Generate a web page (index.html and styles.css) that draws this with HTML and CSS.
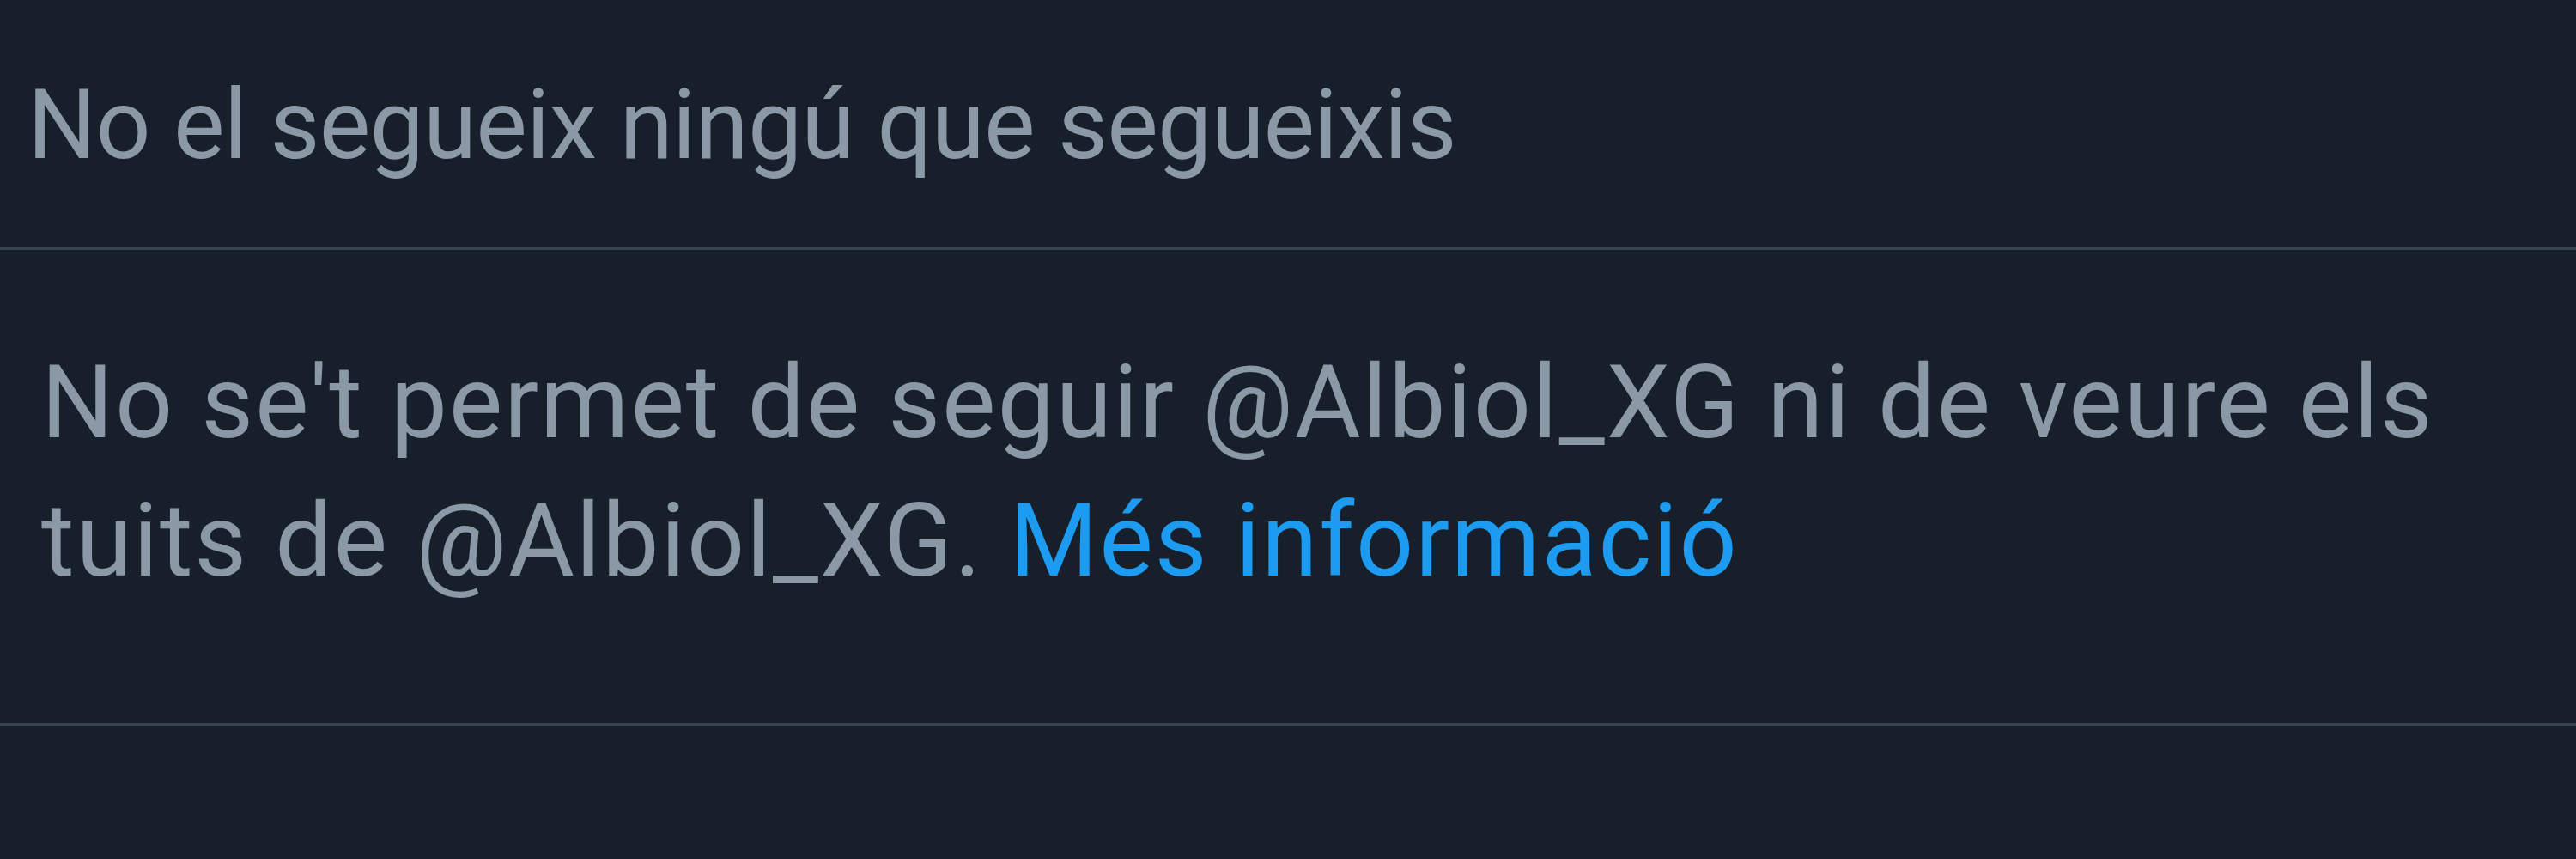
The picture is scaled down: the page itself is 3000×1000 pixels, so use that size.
FILE: index.html
```html
<!DOCTYPE html>
<html lang="ca">
<head>
<meta charset="utf-8">
<link rel="stylesheet" href="styles.css">
</head>
<body>
  <div class="page">
    <section class="row row-top">
      <p class="muted muted-small">No el segueix ningú que segueixis</p>
    </section>
    <section class="row row-notice">
      <p class="muted muted-large">No se't permet de seguir @Albiol_XG ni de veure els tuits de @Albiol_XG. <a class="link" href="#">Més informació</a></p>
    </section>
    <div class="rest"></div>
  </div>
</body>
</html>
```

FILE: styles.css
```css
html, body {
  margin: 0;
  padding: 0;
  background: #17202a;
}
.page {
  width: 3000px;
  height: 1000px;
  background: #17202a;
  font-family: Roboto, "Noto Sans", "Liberation Sans", sans-serif;
  display: flex;
  flex-direction: column;
}
.row {
  border-bottom: 3px solid #38444d;
}
.row-top {
  padding: 66px 0 62px 32px;
}
.row-notice {
  padding: 98px 0 131px 48px;
}
.muted {
  margin: 0;
  color: #8b98a5;
}
.muted-small {
  font-size: 112.5px;
  line-height: 160px;
  letter-spacing: -0.8px;
}
.muted-large {
  font-size: 118px;
  line-height: 161px;
  letter-spacing: 1.85px;
  max-width: 2850px;
}
.link {
  color: #1d9bf0;
  text-decoration: none;
}
.rest {
  flex: 1;
}
```
